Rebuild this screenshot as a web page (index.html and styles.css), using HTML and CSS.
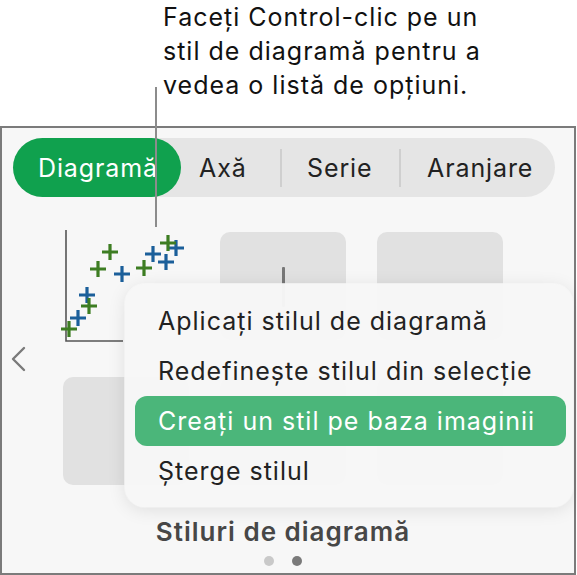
FILE: index.html
```html
<!DOCTYPE html>
<html lang="ro">
<head>
  <meta charset="UTF-8">
  <title>Stiluri de diagramă</title>
  <link rel="stylesheet" href="styles.css">
</head>
<body>
  <p class="caption">Faceți Control-clic pe un<br>stil de diagramă pentru a<br>vedea o listă de opțiuni.</p>
  <div class="callout-line"></div>

  <div class="panel">
    <div class="tabs">
      <div class="tab active">Diagramă</div>
      <div class="tab tab-axa">Axă</div>
      <span class="tab-sep"></span>
      <div class="tab tab-serie">Serie</div>
      <span class="tab-sep"></span>
      <div class="tab tab-aranjare">Aranjare</div>
    </div>

    <div class="gallery">
      <div class="nav-col">
        <svg class="chevron" width="16" height="26" viewBox="0 0 16 26">
          <path d="M13 2 L2 13 L13 24" fill="none" stroke="#7a7a7a" stroke-width="2.4" stroke-linecap="round" stroke-linejoin="round"/>
        </svg>
      </div>
      <div class="styles">
        <div class="grid">
          <div class="tile scatter">
            <svg width="126" height="108" viewBox="0 0 126 108" overflow="visible">
              <path d="M3 -2 V109 H60" fill="none" stroke="#555" stroke-width="1.6"/>
              <g stroke-width="3.2" fill="none">
                <path stroke="#1b5f9a" d="M51 42 h16 M59 34 v16"/>
                <path stroke="#1b5f9a" d="M82 22 h16 M90 14 v16"/>
                <path stroke="#1b5f9a" d="M95 30 h16 M103 22 v16"/>
                <path stroke="#1b5f9a" d="M105 16 h16 M113 8 v16"/>
                <path stroke="#1b5f9a" d="M16 63 h16 M24 55 v16"/>
                <path stroke="#1b5f9a" d="M7 86 h16 M15 78 v16"/>
                <path stroke="#3d7d22" d="M39 20 h16 M47 12 v16"/>
                <path stroke="#3d7d22" d="M27 37 h16 M35 29 v16"/>
                <path stroke="#3d7d22" d="M73 36 h16 M81 28 v16"/>
                <path stroke="#3d7d22" d="M97 11 h16 M105 3 v16"/>
                <path stroke="#3d7d22" d="M18 74 h16 M26 66 v16"/>
                <path stroke="#3d7d22" d="M-2 97 h16 M6 89 v16"/>
              </g>
            </svg>
          </div>
          <div class="tile"><span class="bar"></span></div>
          <div class="tile"></div>
          <div class="tile"></div>
          <div class="tile"></div>
          <div class="tile"></div>
        </div>
        <div class="styles-title">Stiluri de diagramă</div>
        <div class="dots">
          <span class="dot"></span>
          <span class="dot current"></span>
        </div>
      </div>
    </div>

    <!-- context menu shown over the gallery -->
    <ul class="menu">
      <li>Aplicați stilul de diagramă</li>
      <li>Redefinește stilul din selecție</li>
      <li class="selected">Creați un stil pe baza imaginii</li>
      <li>Șterge stilul</li>
    </ul>
  </div>
</body>
</html>
```

FILE: styles.css
```css
body {
  margin: 0;
  background-color: #fff;
  font-family: Inter, "Noto Sans", "DejaVu Sans", sans-serif;
  color: #1d1d1f;
  width: 577px;
  height: 575px;
  overflow: hidden;
  position: relative;
}

.caption {
  margin: 0;
  padding-left: 163px;
  font-size: 25px;
  line-height: 34px;
  letter-spacing: 1px;
  color: #111;
}

.callout-line {
  position: absolute;
  left: 155px;
  top: 87px;
  width: 2px;
  height: 140px;
  background-color: #8c8c8c;
  z-index: 5;
}

.panel {
  position: relative;
  box-sizing: border-box;
  width: 576px;
  height: 449px;
  margin-top: 24px;
  border: 2px solid #7b7b7b;
  background-color: #f7f7f7;
  padding: 10px 0 0 11px;
}

/* segmented tab control */
.tabs {
  display: flex;
  align-items: center;
  width: 542px;
  height: 59px;
  border-radius: 30px;
  background-color: #e5e5e5;
}

.tab {
  box-sizing: border-box;
  height: 59px;
  display: flex;
  align-items: center;
  font-size: 25px;
  letter-spacing: 0.9px;
  color: #222;
}

.tab.active {
  width: 168px;
  justify-content: center;
  padding-left: 2px;
  border-radius: 30px;
  background-color: #10a14e;
  color: #fff;
}

.tab-axa {
  width: 99px;
  padding-left: 18px;
}

.tab-serie {
  width: 117px;
  padding-left: 25px;
}

.tab-aranjare {
  width: 154px;
  padding-left: 26px;
}

.tab-sep {
  width: 2px;
  height: 38px;
  background-color: #cfcfcf;
}

/* style gallery */
.gallery {
  display: flex;
  margin-top: 35px;
  margin-left: -11px;
}

.nav-col {
  width: 61px;
  height: 253px;
  display: flex;
  align-items: center;
  padding-left: 9px;
  box-sizing: border-box;
}

.styles {
  display: flex;
  flex-direction: column;
  align-items: center;
  width: 440px;
}

.grid {
  display: grid;
  grid-template-columns: repeat(3, 126px);
  grid-template-rows: repeat(2, 108px);
  column-gap: 31px;
  row-gap: 37px;
}

.tile {
  position: relative;
  border-radius: 10px;
  background-color: #e1e1e1;
}

.tile.scatter {
  background: none;
}

.tile .bar {
  position: absolute;
  left: 62px;
  top: 35px;
  width: 3px;
  height: 40px;
  border-radius: 1px;
  background-color: #777;
}

.styles-title {
  margin-top: 32px;
  font-size: 26px;
  line-height: 30px;
  font-weight: 600;
  letter-spacing: 1px;
  color: #474747;
}

.dots {
  display: flex;
  gap: 18px;
  margin-top: 9px;
}

.dot {
  width: 10px;
  height: 10px;
  border-radius: 50%;
  background-color: #c9c9c9;
}

.dot.current {
  background-color: #7a7a7a;
}

/* context menu */
.menu {
  position: absolute;
  left: 123px;
  top: 156px;
  width: 448px;
  margin: 0;
  padding: 12px 7px 11px 10px;
  box-sizing: border-box;
  list-style: none;
  border-radius: 20px;
  background-color: rgba(247, 247, 247, 0.97);
  box-shadow: 0 3px 18px rgba(0, 0, 0, 0.10), 0 0 0 1px rgba(255, 255, 255, 0.8);
  z-index: 3;
}

.menu li {
  height: 50px;
  line-height: 50px;
  padding-left: 23px;
  font-size: 25px;
  letter-spacing: 1px;
  color: #222;
  border-radius: 12px;
  white-space: nowrap;
}

.menu li.selected {
  background-color: #4bb67a;
  color: #fff;
}
```
